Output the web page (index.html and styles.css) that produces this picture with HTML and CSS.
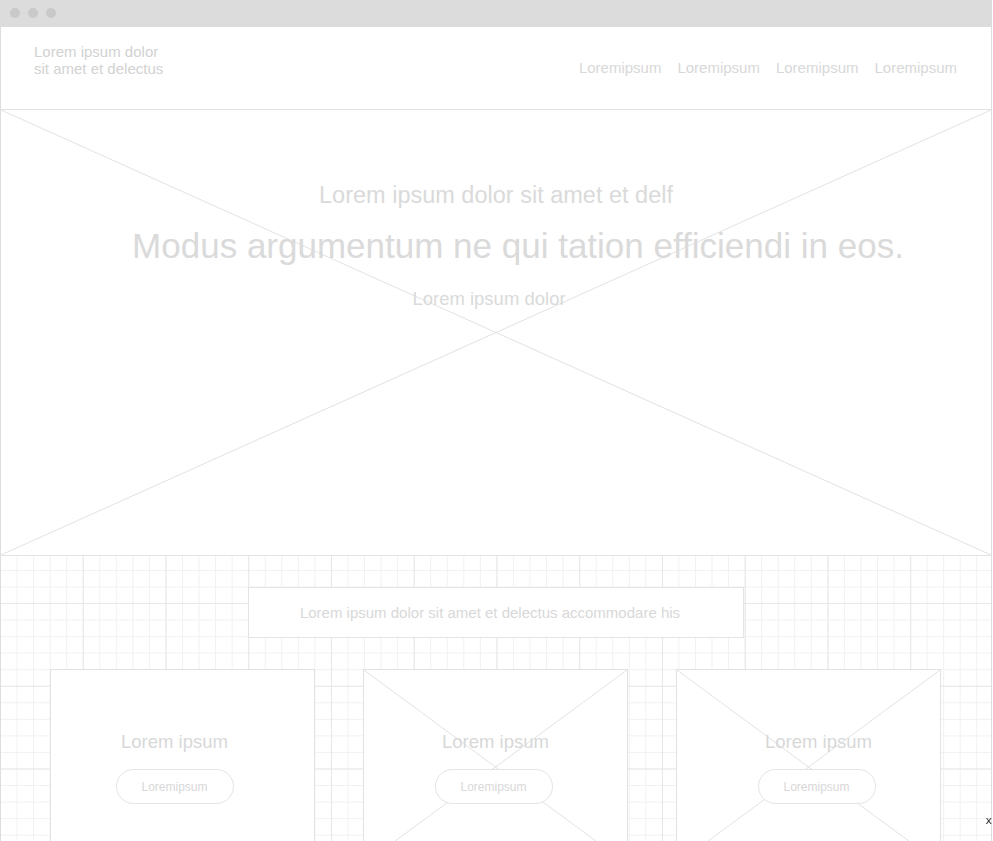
FILE: index.html
```html
<!DOCTYPE html>
<html lang="en">
<head>
    <meta charset="UTF-8">
    <title>Wireframe</title>
    <link rel="stylesheet" href="styles.css">
</head>
<body>
    <div class="window">
        <div class="titlebar">
            <span class="dot"></span>
            <span class="dot"></span>
            <span class="dot"></span>
        </div>

        <header class="header">
            <div class="logo">Lorem ipsum dolor<br>sit amet et delectus</div>
            <nav class="nav">
                <a href="#">Loremipsum</a>
                <a href="#">Loremipsum</a>
                <a href="#">Loremipsum</a>
                <a href="#">Loremipsum</a>
            </nav>
        </header>

        <section class="hero">
            <svg class="cross" viewBox="0 0 100 100" preserveAspectRatio="none">
                <line x1="0" y1="0" x2="100" y2="100" vector-effect="non-scaling-stroke"/>
                <line x1="100" y1="0" x2="0" y2="100" vector-effect="non-scaling-stroke"/>
            </svg>
            <p class="hero-sub">Lorem ipsum dolor sit amet et delf</p>
            <h1 class="hero-title">Modus argumentum ne qui tation efficiendi in eos.</h1>
            <p class="hero-small">Lorem ipsum dolor</p>
        </section>

        <section class="grid-area">
            <div class="banner">Lorem ipsum dolor sit amet et delectus accommodare his</div>
            <div class="cards">
                <div class="card card-left">
                    <h2>Lorem ipsum</h2>
                    <button class="pill">Loremipsum</button>
                </div>
                <div class="card">
                    <svg class="cross" viewBox="0 0 100 100" preserveAspectRatio="none">
                        <line x1="0" y1="0" x2="100" y2="100" vector-effect="non-scaling-stroke"/>
                        <line x1="100" y1="0" x2="0" y2="100" vector-effect="non-scaling-stroke"/>
                    </svg>
                    <h2>Lorem ipsum</h2>
                    <button class="pill">Loremipsum</button>
                </div>
                <div class="card card-right">
                    <svg class="cross" viewBox="0 0 100 100" preserveAspectRatio="none">
                        <line x1="0" y1="0" x2="100" y2="100" vector-effect="non-scaling-stroke"/>
                        <line x1="100" y1="0" x2="0" y2="100" vector-effect="non-scaling-stroke"/>
                    </svg>
                    <h2>Lorem ipsum</h2>
                    <button class="pill">Loremipsum</button>
                </div>
            </div>
        </section>
    </div>

    <span class="corner-x">x</span>
</body>
</html>
```

FILE: styles.css
```css
body, html {
    margin: 0;
    padding: 0;
    height: 100%;
    overflow: hidden;
    background: #fff;
    font-family: "Liberation Sans", Arial, sans-serif;
    color: #dadada;
}
.window {
    width: 992px;
    border-left: 1px solid #dedede;
    border-right: 1px solid #dedede;
    box-sizing: border-box;
}
.titlebar {
    height: 27px;
    background-color: #dcdcdc;
    display: flex;
    align-items: center;
    gap: 8px;
    padding: 0 0 2px 10px;
    box-sizing: border-box;
    margin: 0 -1px;
}
.dot {
    width: 10px;
    height: 10px;
    border-radius: 50%;
    background-color: #c9c9c9;
}
.header {
    height: 83px;
    border-bottom: 1px solid #e2e2e2;
    box-sizing: border-box;
    display: flex;
    justify-content: space-between;
    padding: 16px 34px 0 33px;
}
.logo {
    font-size: 15px;
    line-height: 17px;
    color: #d2d2d2;
}
.nav {
    display: flex;
    gap: 16px;
    padding-top: 16px;
}
.nav a {
    color: #d8d8d8;
    font-size: 15px;
    text-decoration: none;
}
.hero {
    position: relative;
    height: 446px;
    border-bottom: 1px solid #e2e2e2;
    box-sizing: border-box;
    padding-top: 72px;
    text-align: center;
}
.cross {
    position: absolute;
    left: 0;
    top: 0;
    width: 100%;
    height: 100%;
}
.cross line {
    stroke: #e2e2e2;
    stroke-width: 1;
}
.hero p, .hero h1 {
    position: relative;
    margin: 0;
    font-weight: normal;
}
.hero-sub {
    font-size: 23.5px;
    line-height: 27px;
}
.hero-title {
    font-size: 35px;
    line-height: 42px;
    margin-top: 16px !important;
    padding-left: 44px;
}
.hero-small {
    font-size: 18.5px;
    line-height: 22px;
    margin-top: 21px !important;
    padding-right: 14px;
}
.grid-area {
    height: 320px;
    padding-top: 31px;
    box-sizing: border-box;
    background-image:
        linear-gradient(to right, #e7e7e7 1px, transparent 1px),
        linear-gradient(to bottom, #e7e7e7 1px, transparent 1px),
        linear-gradient(to right, #f1f1f1 1px, transparent 1px),
        linear-gradient(to bottom, #f1f1f1 1px, transparent 1px);
    background-size: 82.75px 82.75px, 82.75px 82.75px, 16.55px 16.55px, 16.55px 16.55px;
    background-position: 81.75px 47px, 81.75px 47px, 15.55px 13.95px, 15.55px 13.95px;
}
.banner {
    width: 496px;
    height: 51px;
    margin-left: 247px;
    box-sizing: border-box;
    border: 1px solid #e4e4e4;
    background: #fff;
    display: flex;
    align-items: center;
    justify-content: center;
    padding-right: 12px;
    font-size: 15px;
    color: #d8d8d8;
}
.cards {
    display: grid;
    grid-template-columns: repeat(3, 265px);
    gap: 48px;
    padding: 31px 0 0 49px;
}
.card {
    position: relative;
    height: 196px;
    box-sizing: border-box;
    border: 1px solid #e2e2e2;
    background: #fff;
    display: flex;
    flex-direction: column;
    align-items: center;
    padding-top: 61px;
}
.card-left {
    padding-right: 16px;
}
.card-right {
    padding-left: 20px;
}
.card h2 {
    position: relative;
    margin: 0;
    font-size: 18.5px;
    line-height: 22px;
    font-weight: normal;
    color: #d8d8d8;
}
.pill {
    position: relative;
    margin: 16px 4px 0 0;
    width: 118px;
    height: 35px;
    border: 1px solid #e4e4e4;
    border-radius: 18px;
    background: #fff;
    font-family: "Liberation Sans", Arial, sans-serif;
    font-size: 12px;
    color: #d8d8d8;
    padding: 0;
}
.card-left .pill {
    margin-right: 0;
}
.corner-x {
    position: fixed;
    right: 1px;
    bottom: 14px;
    font-size: 11px;
    color: #333;
    font-family: "DejaVu Sans", sans-serif;
}
```
